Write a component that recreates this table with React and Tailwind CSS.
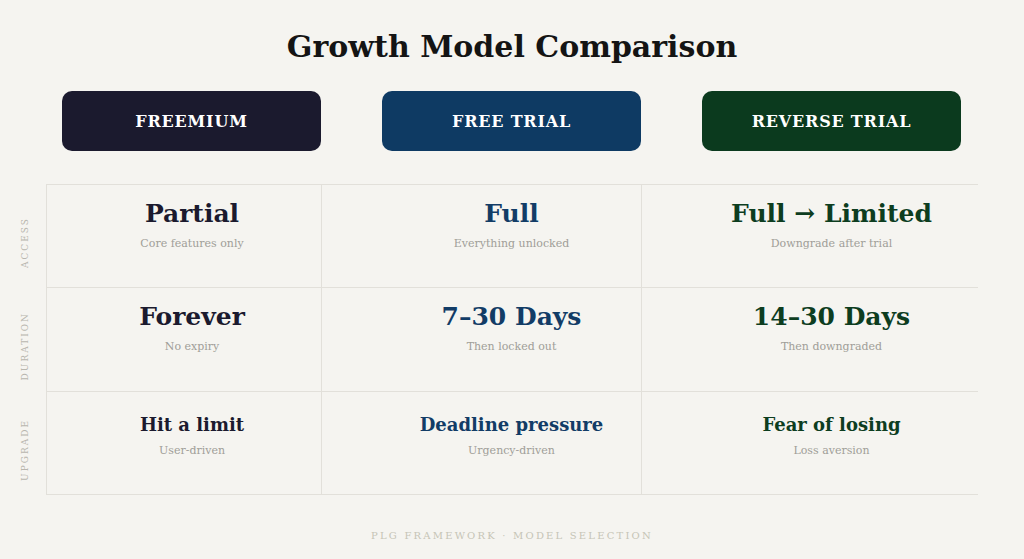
const models = [
  { name: 'FREEMIUM', bg: 'bg-[#1b1a2e]', text: 'text-[#1b1a2e]' },
  { name: 'FREE TRIAL', bg: 'bg-[#0e3a63]', text: 'text-[#123c66]' },
  { name: 'REVERSE TRIAL', bg: 'bg-[#0b3a1e]', text: 'text-[#0d3d1f]' },
];

const rows = [
  {
    label: 'ACCESS',
    big: true,
    h: 'h-[103px]',
    cells: [
      ['Partial', 'Core features only'],
      ['Full', 'Everything unlocked'],
      ['Full → Limited', 'Downgrade after trial'],
    ],
  },
  {
    label: 'DURATION',
    big: true,
    h: 'h-[104px]',
    cells: [
      ['Forever', 'No expiry'],
      ['7–30 Days', 'Then locked out'],
      ['14–30 Days', 'Then downgraded'],
    ],
  },
  {
    label: 'UPGRADE',
    big: false,
    h: 'h-[103px]',
    cells: [
      ['Hit a limit', 'User-driven'],
      ['Deadline pressure', 'Urgency-driven'],
      ['Fear of losing', 'Loss aversion'],
    ],
  },
];

// column boxes: border-left position + padding so text centres under the header pills
const colClass = ['w-[275px] pl-[16px]', 'w-[320px] pl-[60px]', 'w-[337px] pl-[60px] pr-[17px]'];

export default function App() {
  return (
    <div className="w-[1024px] h-[559px] bg-[#f5f4f0] font-['DejaVu_Serif',Georgia,serif] overflow-hidden">
      <h1 className="pt-[28px] text-center text-[30px] leading-[38px] font-bold text-[#141414]">
        Growth Model Comparison
      </h1>

      <div className="flex mt-[25px] pl-[62px] gap-[61px]">
        {models.map((m) => (
          <div
            key={m.name}
            className={`w-[259px] h-[60px] rounded-[10px] flex items-center justify-center ${m.bg}`}
          >
            <span className="text-white text-[16px] leading-[20px] pt-[2px] font-bold tracking-[0.8px]">{m.name}</span>
          </div>
        ))}
      </div>

      <div className="flex mt-[33px]">
        <div className="w-[46px] border-t border-transparent">
          {rows.map((r) => (
            <div key={r.label} className={`${r.h} flex items-center justify-center pt-[12px] pl-[6px]`}>
              <span className="[writing-mode:vertical-rl] rotate-180 text-[9px] tracking-[2px] text-[#b8b6ae]">
                {r.label}
              </span>
            </div>
          ))}
        </div>

        <div className="border-t border-[#e2e0da]">
          {rows.map((r) => (
            <div key={r.label} className={`flex ${r.h} border-b border-[#e2e0da]`}>
              {r.cells.map(([title, sub], i) => (
                <div key={title} className={`border-l border-[#e2e0da] ${colClass[i]}`}>
                  <div className={`text-center ${r.big ? 'pt-[13px]' : 'pt-[21px]'}`}>
                    <div
                      className={`font-bold ${models[i].text} ${
                        r.big ? 'text-[25px] leading-[31px]' : 'text-[18px] leading-[24px]'
                      }`}
                    >
                      {title}
                    </div>
                    <div className={`text-[11px] leading-[16px] text-[#a09e98] ${r.big ? 'mt-[7px]' : 'mt-[6px]'}`}>
                      {sub}
                    </div>
                  </div>
                </div>
              ))}
            </div>
          ))}
        </div>
      </div>

      <div className="mt-[33px] text-center text-[10px] tracking-[2.2px] text-[#c6c4b6]">
        PLG FRAMEWORK · MODEL SELECTION
      </div>
    </div>
  );
}
